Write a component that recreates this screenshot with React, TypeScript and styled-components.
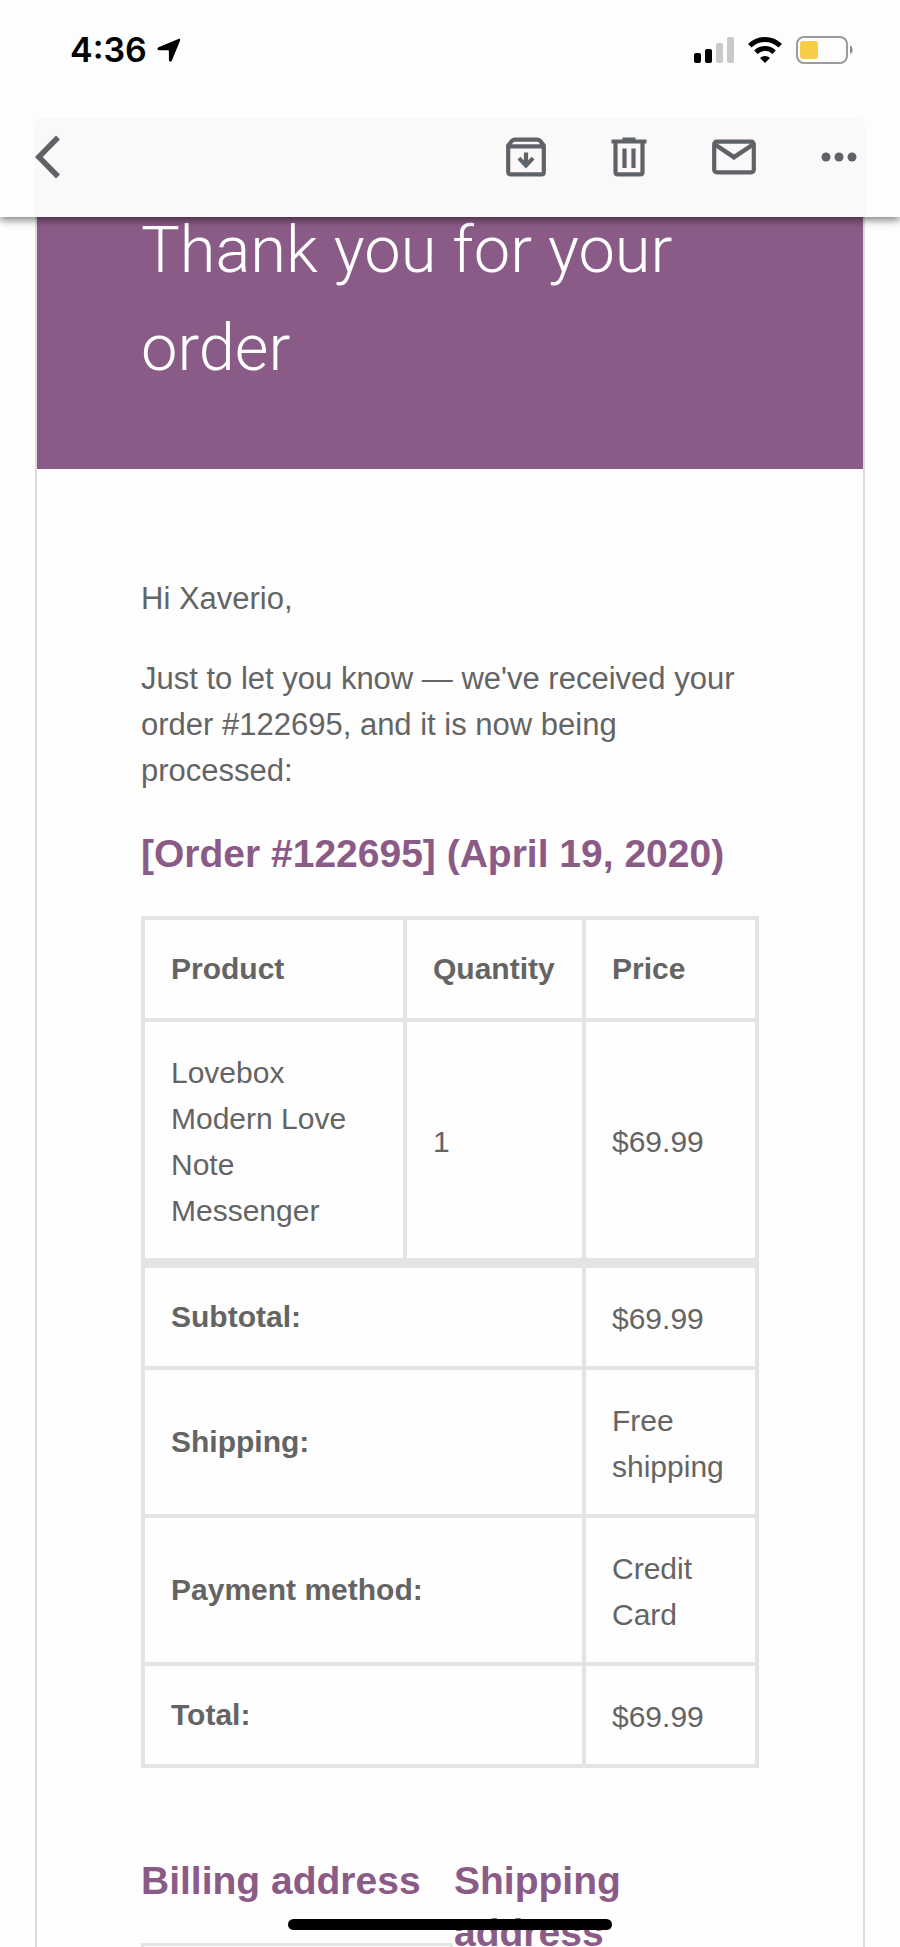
import React from 'react';
import styled, { createGlobalStyle } from 'styled-components';

const purple = '#8b5b87';
const line = '#e4e4e4';
const iconGrey = '#5f6368';

const GlobalStyle = createGlobalStyle`
  *, *::before, *::after { box-sizing: border-box; }
  body {
    margin: 0;
    background: #fefefe;
    color: #646464;
    font-family: "Liberation Sans", Arial, sans-serif;
    font-size: 30px;
    line-height: 46px;
  }
`;

const Screen = styled.div`
  position: relative;
  display: flex;
  flex-direction: column;
  height: 100vh;
  overflow: hidden;
`;

const Header = styled.header`
  flex: none;
  padding: 0 35px;
  background: #fdfdfd;
  box-shadow: 0 3px 8px rgba(0, 0, 0, 0.5);
  z-index: 1;
`;

const StatusBar = styled.div`
  display: flex;
  align-items: center;
  justify-content: space-between;
  height: 118px;
  padding: 0 12px 19px 35px;
`;

const Clock = styled.div`
  display: flex;
  align-items: center;
  gap: 10px;
  color: #000;
  font-family: Inter, sans-serif;
  font-size: 34px;
  font-weight: 600;
  line-height: 40px;
`;

const StatusIcons = styled.div`
  display: flex;
  align-items: center;
  gap: 14px;
`;

const Toolbar = styled.nav`
  display: flex;
  align-items: flex-start;
  justify-content: space-between;
  height: 99px;
  padding-top: 17px;
  border-radius: 6px 6px 0 0;
  background: #faf8f9;
`;

const ToolGroup = styled.div`
  display: flex;
  align-items: center;
  gap: 65px;
  padding-right: 8px;
`;

const IconButton = styled.button`
  display: flex;
  align-items: center;
  justify-content: center;
  height: 44px;
  padding: 0;
  border: 0;
  background: none;
  color: ${iconGrey};
`;

const Mail = styled.main`
  flex: 1;
  min-height: 0;
  overflow: hidden;
  padding: 0 35px;
`;

const Card = styled.article`
  min-height: 100%;
  border: solid #dcdcdc;
  border-width: 0 2px;
`;

const Hero = styled.div`
  padding: 0 104px 72px;
  background: ${purple};
`;

const Title = styled.h1`
  margin: -16px 0 0;
  color: #fff;
  font-family: Roboto, "Liberation Sans", sans-serif;
  font-size: 65px;
  font-weight: 300;
  line-height: 98px;
`;

const Content = styled.div`
  padding: 107px 104px 0;
`;

const Paragraph = styled.p`
  margin: 0 0 34px;
  padding-right: 4px;
  font-size: 31px;
`;

const Heading = styled.h2`
  margin: 0;
  color: ${purple};
  font-size: 39px;
  font-weight: 700;
  line-height: 52px;
`;

const OrderTable = styled.table`
  width: 100%;
  margin: 36px 0 87px;
  table-layout: fixed;
  border: 2px solid ${line};
  border-spacing: 0;
`;

const QuantityColumn = styled.col`
  width: 179px;
`;

const PriceColumn = styled.col`
  width: 173px;
`;

const HeadCell = styled.th<{ $thick?: boolean }>`
  padding: 26px 20px 26px 26px;
  border: 2px solid ${line};
  border-top-width: ${(p) => (p.$thick ? 8 : 2)}px;
  text-align: left;
`;

const Cell = styled.td<{ $thick?: boolean }>`
  padding: 28px 20px 24px 26px;
  border: 2px solid ${line};
  border-top-width: ${(p) => (p.$thick ? 8 : 2)}px;
`;

const Addresses = styled.div`
  display: grid;
  grid-template-columns: 313px 1fr;
`;

const AddressColumn = styled.section`
  padding-right: 1px;
`;

const AddressBox = styled.div`
  height: 200px;
  margin-top: 36px;
  border: 3px solid ${line};
`;

const HomeIndicator = styled.div`
  position: absolute;
  bottom: 17px;
  left: 50%;
  width: 36%;
  height: 11px;
  border-radius: 6px;
  background: #000;
  transform: translateX(-50%);
  z-index: 2;
`;

const totals = [
  { label: 'Subtotal:', value: '$69.99' },
  { label: 'Shipping:', value: 'Free shipping' },
  { label: 'Payment method:', value: 'Credit Card' },
  { label: 'Total:', value: '$69.99' },
];

const LocationArrow = () => (
  <svg width="24" height="24" viewBox="0 0 24 24" aria-hidden="true">
    <path d="M1.500 9.200 21.400 1c1.200-.5 2.100.5 1.600 1.700l-8.200 20c-.6 1.400-2.900 1.100-2.900-.5V13c0-.5-.3-.8-.8-.8H2C.2 12.200-.1 9.900 1.500 9.200z" fill="#000" />
  </svg>
);

const Signal = () => (
  <svg width="40" height="26" viewBox="0 0 40 26" aria-hidden="true">
    <rect x="0" y="16" width="7" height="10" rx="2" fill="#000" />
    <rect x="11" y="12" width="7" height="14" rx="2" fill="#000" />
    <rect x="22" y="6" width="7" height="20" rx="2" fill="#c9c9c9" />
    <rect x="33" y="0" width="7" height="26" rx="2" fill="#c9c9c9" />
  </svg>
);

const Wifi = () => (
  <svg width="34" height="26" viewBox="0 0 34 26" aria-hidden="true" fill="none" stroke="#000">
    <path d="M1.800 8.800A21.500 21.500 0 0 1 32.200 8.800" strokeWidth="5" />
    <path d="M7.900 15.200A12.900 12.900 0 0 1 26.100 15.200" strokeWidth="4.800" />
    <path d="M12 21a7 7 0 0 1 10 0l-5 5z" fill="#000" stroke="none" />
  </svg>
);

const Battery = () => (
  <svg width="57" height="28" viewBox="0 0 57 28" aria-hidden="true">
    <rect x="1" y="1" width="50" height="26" rx="7" fill="none" stroke="#9c9c9c" strokeWidth="2" />
    <rect x="4" y="5" width="18" height="18" rx="3" fill="#f7cd46" />
    <path d="M54 9.500c3.500 1.200 3.500 7.300 0 8.500z" fill="#8a8a8a" />
  </svg>
);

const Back = () => (
  <svg width="26" height="44" viewBox="0 0 26 44" fill="none" stroke="currentColor" strokeWidth="5.500">
    <path d="M23 2.500 3.800 22 23 41.500" />
  </svg>
);

const Archive = () => (
  <svg width="40" height="40" viewBox="0 0 40 40" fill="none" stroke="currentColor" strokeWidth="4.200">
    <path d="M2.200 8.500 6 3.800Q7.300 2.600 8.500 2.600h23q1.200 0 2.500 1.200l3.800 4.700V35q0 2.400-2.400 2.400H4.600Q2.200 37.400 2.200 35z" />
    <path d="M2 9.300h36" />
    <path d="M20 15.500v11" />
    <path d="m11.500 22.500 8.500 9 8.500-9-2.800-2.800L20 25.500l-5.700-5.800z" fill="currentColor" stroke="none" />
  </svg>
);

const Trash = () => (
  <svg width="36" height="40" viewBox="0 0 36 40" fill="none" stroke="currentColor" strokeWidth="4.200">
    <path d="M0.500 4.500h35" />
    <path d="M11.500 2h13" strokeWidth="3" />
    <path d="M4.500 5v30q0 2.400 2.400 2.400h22.200q2.400 0 2.400-2.400V5" />
    <path d="M13.500 11.500v19.500M22.500 11.500v19.500" />
  </svg>
);

const Envelope = () => (
  <svg width="44" height="36" viewBox="0 0 44 36" fill="none" stroke="currentColor" strokeWidth="4.200">
    <rect x="2.200" y="2.700" width="39.600" height="30.600" rx="2.500" />
    <path d="M3 5.500 22 18.200 41 5.500" strokeWidth="4.500" />
  </svg>
);

const Dots = () => (
  <svg width="36" height="10" viewBox="0 0 36 10" fill="currentColor">
    <circle cx="5" cy="5" r="4.500" />
    <circle cx="18" cy="5" r="4.500" />
    <circle cx="31" cy="5" r="4.500" />
  </svg>
);

export default function App() {
  return (
    <Screen>
      <GlobalStyle />
      <Header>
        <StatusBar>
          <Clock>
            4:36
            <LocationArrow />
          </Clock>
          <StatusIcons>
            <Signal />
            <Wifi />
            <Battery />
          </StatusIcons>
        </StatusBar>
        <Toolbar aria-label="Message actions">
          <IconButton aria-label="Back"><Back /></IconButton>
          <ToolGroup>
            <IconButton aria-label="Archive"><Archive /></IconButton>
            <IconButton aria-label="Delete"><Trash /></IconButton>
            <IconButton aria-label="Mark as unread"><Envelope /></IconButton>
            <IconButton aria-label="More options"><Dots /></IconButton>
          </ToolGroup>
        </Toolbar>
      </Header>
      <Mail>
        <Card>
          <Hero>
            <Title>Thank you for your order</Title>
          </Hero>
          <Content>
            <Paragraph>Hi Xaverio,</Paragraph>
            <Paragraph>
              Just to let you know — we've received your order #122695, and it is now being processed:
            </Paragraph>
            <Heading>[Order #122695] (April 19, 2020)</Heading>
            <OrderTable>
              <colgroup>
                <col />
                <QuantityColumn />
                <PriceColumn />
              </colgroup>
              <thead>
                <tr>
                  <HeadCell scope="col">Product</HeadCell>
                  <HeadCell scope="col">Quantity</HeadCell>
                  <HeadCell scope="col">Price</HeadCell>
                </tr>
              </thead>
              <tbody>
                <tr>
                  <Cell>Lovebox Modern Love Note Messenger</Cell>
                  <Cell>1</Cell>
                  <Cell>$69.99</Cell>
                </tr>
              </tbody>
              <tfoot>
                {totals.map((row, i) => (
                  <tr key={row.label}>
                    <HeadCell scope="row" colSpan={2} $thick={i === 0}>{row.label}</HeadCell>
                    <Cell $thick={i === 0}>{row.value}</Cell>
                  </tr>
                ))}
              </tfoot>
            </OrderTable>
            <Addresses>
              <AddressColumn>
                <Heading>Billing address</Heading>
                <AddressBox />
              </AddressColumn>
              <AddressColumn>
                <Heading>Shipping address</Heading>
                <AddressBox />
              </AddressColumn>
            </Addresses>
          </Content>
        </Card>
      </Mail>
      <HomeIndicator />
    </Screen>
  );
}
